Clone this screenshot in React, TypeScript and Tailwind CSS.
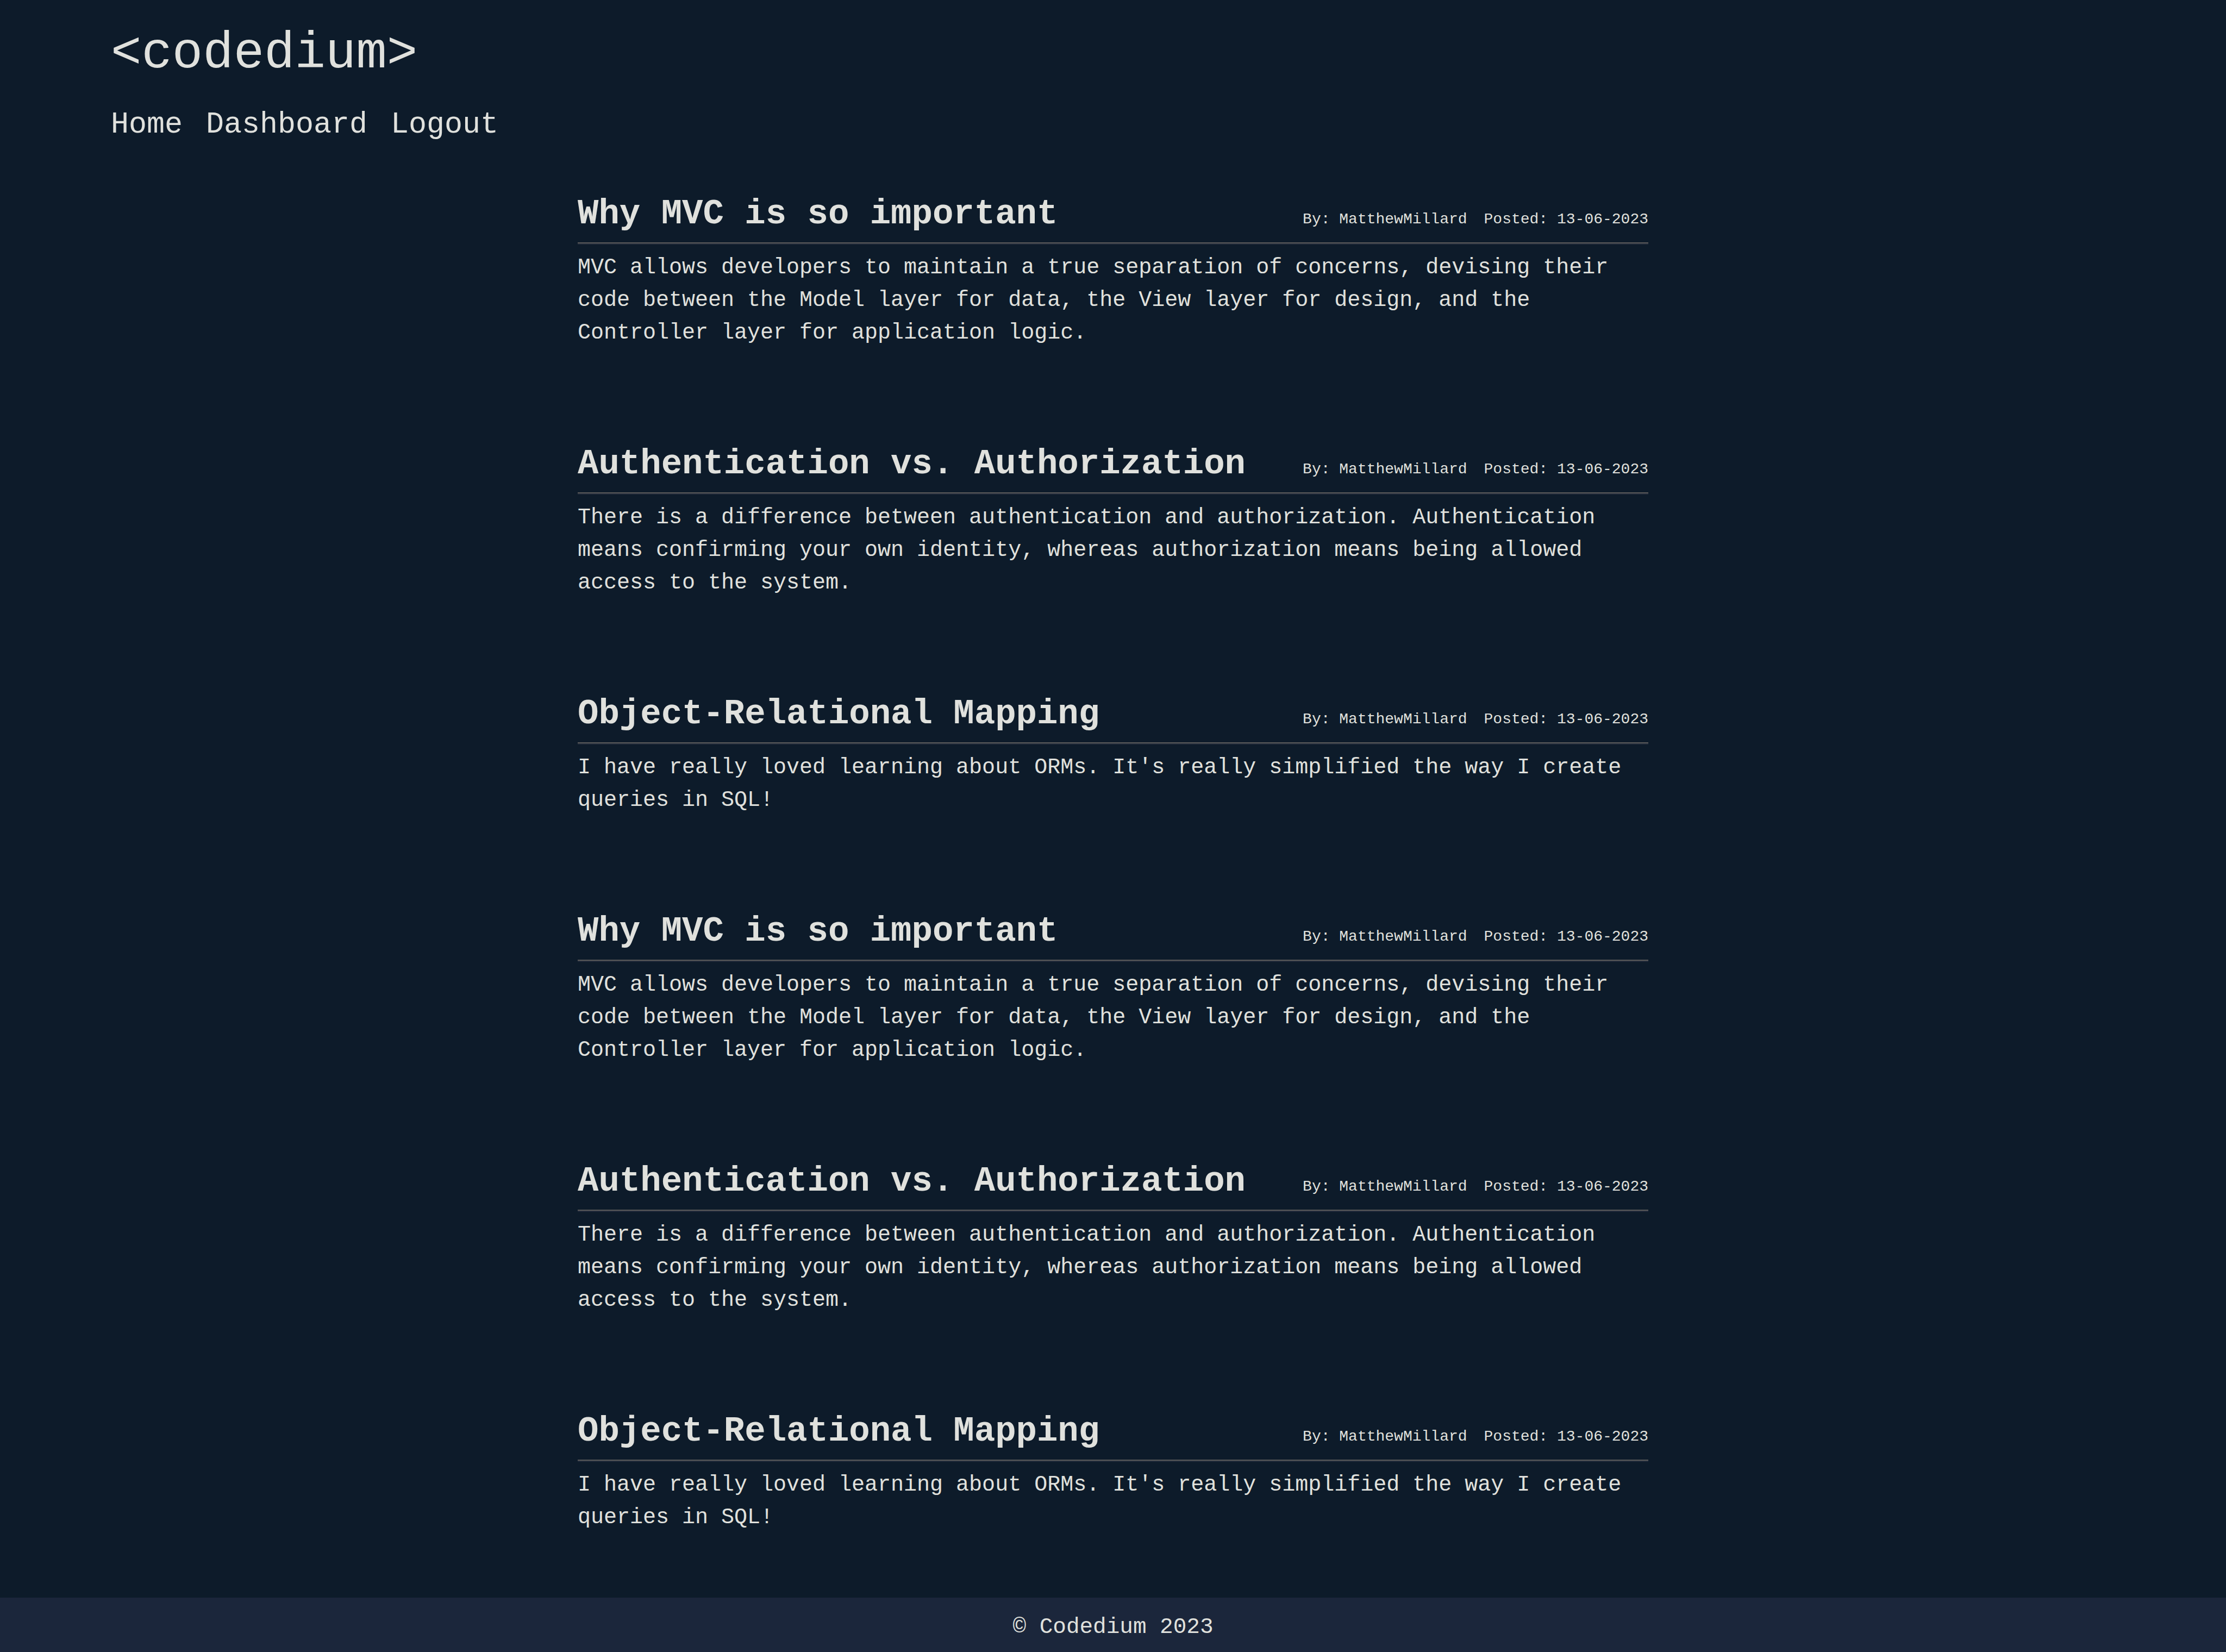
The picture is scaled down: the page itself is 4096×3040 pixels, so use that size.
import React from 'react'

interface Post {
  title: string
  author: string
  date: string
  body: string
}

const posts: Post[] = [
  {
    title: 'Why MVC is so important',
    author: 'MatthewMillard',
    date: '13-06-2023',
    body: 'MVC allows developers to maintain a true separation of concerns, devising their code between the Model layer for data, the View layer for design, and the Controller layer for application logic.',
  },
  {
    title: 'Authentication vs. Authorization',
    author: 'MatthewMillard',
    date: '13-06-2023',
    body: 'There is a difference between authentication and authorization. Authentication means confirming your own identity, whereas authorization means being allowed access to the system.',
  },
  {
    title: 'Object-Relational Mapping',
    author: 'MatthewMillard',
    date: '13-06-2023',
    body: "I have really loved learning about ORMs. It's really simplified the way I create queries in SQL!",
  },
]

function PostCard({ post }: { post: Post }) {
  return (
    <article>
      <div className="flex items-baseline justify-between pb-[9px]">
        <h2 className="text-[64px] leading-[85px] font-bold">{post.title}</h2>
        <div className="flex gap-[31px] text-[28px] leading-[40px]">
          <span>By: {post.author}</span>
          <span>Posted: {post.date}</span>
        </div>
      </div>
      <hr className="h-0 border-0 border-t-2 border-b-2 border-t-[#5b5b5b] border-b-[#222b3b]" />
      <p className="mt-[13px] text-[40px] leading-[60px]">{post.body}</p>
    </article>
  )
}

export default function App() {
  const list = [...posts, ...posts]

  return (
    <div className="min-h-screen flex flex-col bg-[#0d1b2a] text-[#e0e1dd] font-['Liberation_Mono','DejaVu_Sans_Mono',monospace]">
      <header className="px-[204px] pt-[47px]">
        <h1 className="text-[94px] leading-[104px] font-normal">&lt;codedium&gt;</h1>
        <nav className="mt-[40px] flex gap-[43px] text-[55px] leading-[77px]">
          <a href="#">Home</a>
          <a href="#">Dashboard</a>
          <a href="#">Logout</a>
        </nav>
      </header>

      <main className="flex-1 mx-auto w-[1970px] pt-[84px] pb-[116px] flex flex-col gap-[169px]">
        {list.map((post, i) => (
          <PostCard key={i} post={post} />
        ))}
      </main>

      <footer className="h-[100px] pt-[8px] bg-[#1b263b] flex items-center justify-center text-[41px] leading-[60px]">
        © Codedium 2023
      </footer>
    </div>
  )
}
